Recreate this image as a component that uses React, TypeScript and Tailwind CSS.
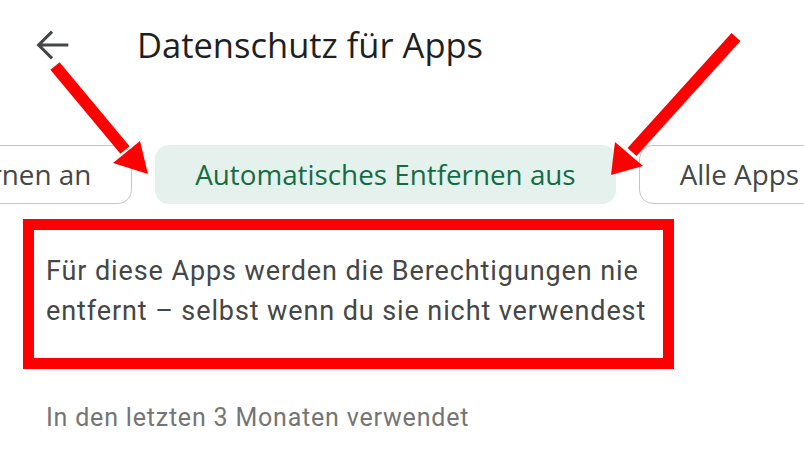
const chips = [
  { label: "Automatisches Entfernen an", active: false },
  { label: "Automatisches Entfernen aus", active: true },
  { label: "Alle Apps", active: false },
];

const Arrows = () => (
  <svg className="pointer-events-none absolute inset-0" width="804" height="470" viewBox="0 0 804 470">
    {/* left arrow */}
    <line x1="55" y1="66" x2="125" y2="150" stroke="#ff0000" strokeWidth="12" />
    <polygon points="148,174 113,163 140,141" fill="#ff0000" />
    {/* right arrow */}
    <line x1="736" y1="37" x2="632" y2="152" stroke="#ff0000" strokeWidth="12" />
    <polygon points="611,175 615,142 643,166" fill="#ff0000" />
  </svg>
);

export default function App() {
  return (
    <div className="relative h-[470px] w-[804px] overflow-hidden bg-white" style={{ fontFamily: "Roboto, sans-serif" }}>
      <header className="flex h-[90px] items-center">
        <button className="ml-[30px] flex h-[46px] w-[46px] items-center justify-center text-[#444746]">
          <svg width="46" height="46" viewBox="0 0 24 24" fill="none" stroke="currentColor" strokeWidth="1.6">
            <path d="M20 12H4.5M11.5 5l-7 7 7 7" />
          </svg>
        </button>
        <h1 className="ml-[61px] text-[34.5px] leading-none text-[#1f1f1f]" style={{ fontFamily: "'Open Sans', sans-serif" }}>
          Datenschutz für Apps
        </h1>
      </header>

      {/* chip row, scrolled so the first chip is partly hidden */}
      <div className="mt-[55px] ml-[-317px] flex gap-[23px]">
        {chips.map((c) => (
          <div
            key={c.label}
            className={
              c.active
                ? "flex h-[59px] shrink-0 items-center rounded-[14px] bg-[#e5f1ed] px-[40px] text-[27.8px] text-[#146c43]"
                : "flex h-[59px] shrink-0 items-center rounded-[14px] border-[1.5px] border-[#c4c7c5] px-[40px] text-[27.8px] text-[#444746]"
            }
            style={{ fontFamily: "'Open Sans', sans-serif" }}
          >
            {c.label}
          </div>
        ))}
      </div>

      <div className="ml-[23px] mt-[15px] w-[651px] border-[11px] border-[#ff0000] pt-[21px] pb-[27px] pl-[12px] text-[27px] leading-[40px] tracking-[0.9px] text-[#444746]">
        <p>Für diese Apps werden die Berechtigungen nie</p>
        <p>entfernt – selbst wenn du sie nicht verwendest</p>
      </div>

      <p className="ml-[46px] mt-[30px] text-[25px] tracking-[0.8px] text-[#757575]">In den letzten 3 Monaten verwendet</p>

      <Arrows />
    </div>
  );
}
